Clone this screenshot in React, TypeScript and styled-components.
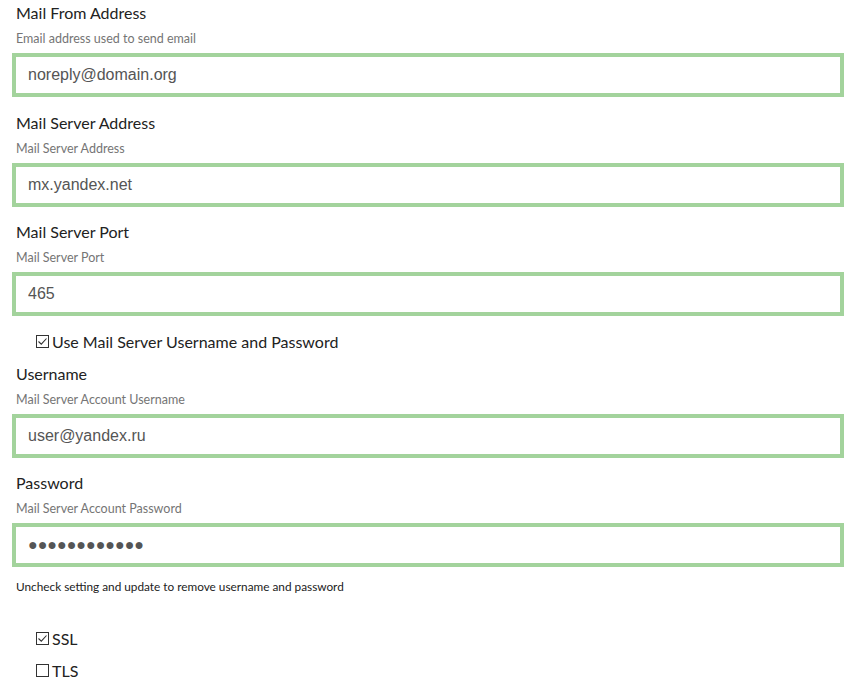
import React from "react";
import styled, { createGlobalStyle } from "styled-components";

const Global = createGlobalStyle`
  html, body { margin: 0; padding: 0; background: #fff; }
  body { font-family: Lato, "Open Sans", sans-serif; color: #333; }
  * { box-sizing: border-box; }
`;

const Page = styled.div`
  display: flex;
  flex-direction: column;
  padding: 3px 11px 0 12px;
  width: 855px;
`;

const Group = styled.div<{ $mb?: number }>`
  display: flex;
  flex-direction: column;
  margin-bottom: ${(p) => p.$mb ?? 15.5}px;
`;

const Label = styled.label`
  font-size: 16px;
  line-height: 20px;
  padding-left: 4px;
  color: #222;
`;

const Help = styled.div`
  font-size: 12.5px;
  line-height: 18px;
  margin-top: 7px;
  padding-left: 4px;
  color: #757575;
`;

const Input = styled.input`
  margin-top: 5px;
  height: 44px;
  width: 100%;
  border: 4px solid #a3d39c;
  padding: 0 12px;
  font-family: "Liberation Sans", Arial, sans-serif;
  font-size: 16px;
  color: #555;
  background: #fff;
  outline: none;
`;

const CheckRow = styled.label<{ $mt?: number; $mb?: number }>`
  display: flex;
  align-items: center;
  gap: 3px;
  padding-left: 24px;
  margin-top: ${(p) => p.$mt ?? 0}px;
  margin-bottom: ${(p) => p.$mb ?? 0}px;
  font-size: 16px;
  line-height: 20px;
  color: #222;
`;

const Box = styled.span`
  width: 13px;
  height: 13px;
  border: 1px solid #333;
  display: inline-flex;
  align-items: center;
  justify-content: center;
  background: #fff;
  flex: none;
`;

const Note = styled.div`
  font-size: 11.8px;
  line-height: 16px;
  padding-left: 4px;
  color: #222;
  margin-top: 12px;
  margin-bottom: 33.5px;
`;

const Check = ({ checked }: { checked: boolean }) => (
  <Box>
    {checked && (
      <svg width="11" height="11" viewBox="0 0 11 11">
        <path d="M1.5 5.5 L4.3 8.2 L9.5 2.5" fill="none" stroke="#333" strokeWidth="1.1" />
      </svg>
    )}
  </Box>
);

const Field = ({ label, help, value, mb }: { label: string; help: string; value: string; mb?: number }) => (
  <Group $mb={mb}>
    <Label>{label}</Label>
    <Help>{help}</Help>
    <Input readOnly value={value} />
  </Group>
);

export default function App() {
  return (
    <>
      <Global />
      <Page>
        <Field label="Mail From Address" help="Email address used to send email" value="noreply@domain.org" />
        <Field label="Mail Server Address" help="Mail Server Address" value="mx.yandex.net" />
        <Field label="Mail Server Port" help="Mail Server Port" value="465" />
        <CheckRow $mb={12}>
          <Check checked />
          Use Mail Server Username and Password
        </CheckRow>
        <Field label="Username" help="Mail Server Account Username" value="user@yandex.ru" />
        <Field label="Password" help="Mail Server Account Password" value={"●●●●●●●●●●●●"} mb={0} />
        <Note>Uncheck setting and update to remove username and password</Note>
        <CheckRow $mb={12}>
          <Check checked />
          SSL
        </CheckRow>
        <CheckRow>
          <Check checked={false} />
          TLS
        </CheckRow>
      </Page>
    </>
  );
}
